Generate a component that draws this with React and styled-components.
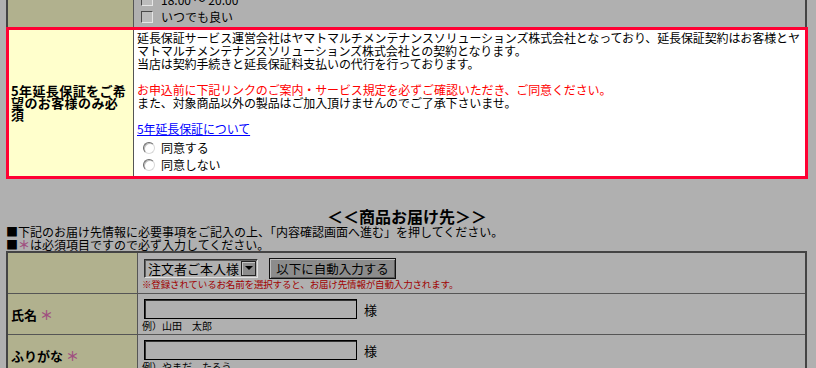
import styled, { createGlobalStyle } from 'styled-components';

const GlobalStyle = createGlobalStyle`
  html, body {
    margin: 0;
    padding: 0;
    background: #b0b0b0;
  }
  body {
    font-family: "Noto Sans CJK JP", "Noto Sans", sans-serif;
    font-size: 12px;
    color: #000;
    overflow: hidden;
  }
`;

const Page = styled.div`
  width: 816px;
  height: 368px;
  overflow: hidden;
  padding-left: 6px;
  box-sizing: border-box;
`;

const TopTable = styled.div`
  margin-top: -9px;
  width: 801px;
  box-sizing: border-box;
  display: grid;
  grid-template-columns: 126px 1fr;
  border-left: 2px solid #444;
  border-right: 2px solid #444;
`;

const KhakiCell = styled.div`
  background: #b1b18e;
  border-right: 1px solid #555;
`;

const TimeCell = styled.div`
  padding: 0 0 2px 7px;
`;

const CheckLine = styled.label`
  display: flex;
  align-items: center;
  gap: 8px;
  height: 17px;
  line-height: 17px;
`;

const CheckBox = styled.span`
  width: 12px;
  height: 12px;
  box-sizing: border-box;
  border: 1px solid;
  border-color: #4a4a4a #e6e6e6 #e6e6e6 #4a4a4a;
  background: #bcbcbc;
`;

const GuaranteeRow = styled.div`
  width: 802px;
  box-sizing: border-box;
  display: grid;
  grid-template-columns: 125px 1fr;
  border: 3px solid #ff0033;
`;

const GuaranteeLabel = styled.div`
  background: #ffffcc;
  border-right: 1px solid #555;
  display: flex;
  align-items: center;
  padding-left: 2px;
  font-size: 13px;
  font-weight: 700;
  line-height: 12px;
  letter-spacing: 0.4px;
`;

const GuaranteeBody = styled.div`
  background: #fff;
  padding: 1px 3px 3px 3px;
  line-height: 13px;
  white-space: nowrap;
  letter-spacing: -0.12px;
`;

const Para = styled.p`
  margin: 0 0 13px;
  color: ${(p) => (p.$red ? '#ff0000' : '#000')};
`;

const Line = styled.div`
  color: ${(p) => (p.$red ? '#ff0000' : '#000')};
`;

const InfoLink = styled.a`
  color: #0000ff;
  text-decoration: underline;
  cursor: pointer;
`;

const RadioGroup = styled.div`
  padding-top: 4px;
`;

const RadioLine = styled.label`
  display: flex;
  align-items: center;
  gap: 6px;
  height: 17px;
  padding-left: 6px;
`;

const Radio = styled.span`
  width: 12px;
  height: 12px;
  box-sizing: border-box;
  border-radius: 50%;
  border: 1px solid;
  border-color: #6a6a6a #d8d8d8 #d8d8d8 #6a6a6a;
  background: #fff;
  box-shadow: inset 1px 1px 0 #bdbdbd;
`;

const Heading = styled.h2`
  margin: 28px 0 0;
  width: 802px;
  text-align: center;
  font-size: 16px;
  font-weight: 700;
  line-height: 18px;
`;

const Notes = styled.div`
  line-height: 13px;
  font-size: 12px;
`;

const Mark = styled.span`
  color: #a05080;
  font-weight: 700;
`;

const FormTable = styled.div`
  width: 801px;
  box-sizing: border-box;
  border: 2px solid #444;
  border-bottom: none;
`;

const FormRow = styled.div`
  display: grid;
  grid-template-columns: 130px 1fr;
  height: 40px;
  border-bottom: 1px solid #555;
`;

const FormLabel = styled.div`
  background: #b1b18e;
  border-right: 1px solid #555;
  display: flex;
  align-items: center;
  gap: 3px;
  padding-left: 3px;
  font-size: 13px;
  font-weight: 700;
`;

const FormValue = styled.div`
  padding: 5px 0 0 4px;
  display: flex;
  flex-direction: column;
`;

const Controls = styled.div`
  display: flex;
  align-items: center;
  height: 20px;
  margin-left: 2px;
  gap: ${(p) => p.$gap || 7}px;
`;

const SelectBox = styled.div`
  width: 114px;
  height: 19px;
  box-sizing: border-box;
  display: flex;
  align-items: center;
  justify-content: space-between;
  border: 1px solid;
  border-color: #303030 #e0e0e0 #e0e0e0 #303030;
  box-shadow: inset 1px 1px 0 #606060;
  padding-left: 3px;
  font-size: 13px;
  line-height: 17px;
`;

const ArrowButton = styled.span`
  width: 15px;
  height: 15px;
  margin-right: 1px;
  box-sizing: border-box;
  background: #8c8c8c;
  border: 1px solid #222;
  box-shadow: inset 1px 1px 0 #c4c4c4;
  display: flex;
  align-items: center;
  justify-content: center;

  &::after {
    content: '';
    border-left: 4px solid transparent;
    border-right: 4px solid transparent;
    border-top: 4px solid #000;
  }
`;

const FillButton = styled.button`
  width: 127px;
  height: 21px;
  box-sizing: border-box;
  background: #8c8c8c;
  border: 1px solid #111;
  box-shadow: inset 1px 1px 0 #c0c0c0, inset -1px -1px 0 #5a5a5a;
  padding: 0;
  font-family: "Noto Sans CJK JP", sans-serif;
  font-size: 12.5px;
  line-height: 19px;
  color: #000;
`;

const Hint = styled.div`
  color: #a00000;
  font-size: 9.5px;
  line-height: 12px;
  letter-spacing: -0.15px;
  white-space: nowrap;
`;

const Example = styled.div`
  font-size: 10px;
  line-height: 12px;
  margin-top: 1px;
`;

const TextInput = styled.input`
  width: 213px;
  height: 20px;
  box-sizing: border-box;
  border: 1px solid #000;
  box-shadow: inset 1px 1px 0 #333;
  background: #b0b0b0;
  outline: none;
`;

const Suffix = styled.span`
  font-size: 13px;
`;

export default function App() {
  return (
    <Page>
      <GlobalStyle />
      <TopTable>
        <KhakiCell />
        <TimeCell>
          <CheckLine><CheckBox />18:00 ～ 20:00</CheckLine>
          <CheckLine><CheckBox />いつでも良い</CheckLine>
        </TimeCell>
      </TopTable>

      <GuaranteeRow>
        <GuaranteeLabel>
          <span>5年延長保証をご希<br />望のお客様のみ必<br />須</span>
        </GuaranteeLabel>
        <GuaranteeBody>
          <Para>
            延長保証サービス運営会社はヤマトマルチメンテナンスソリューションズ株式会社となっており、延長保証契約はお客様とヤ<br />
            マトマルチメンテナンスソリューションズ株式会社との契約となります。<br />
            当店は契約手続きと延長保証料支払いの代行を行っております。
          </Para>
          <Line $red>お申込前に下記リンクのご案内・サービス規定を必ずご確認いただき、ご同意ください。</Line>
          <Para>また、対象商品以外の製品はご加入頂けませんのでご了承下さいませ。</Para>
          <InfoLink>5年延長保証について</InfoLink>
          <RadioGroup>
            <RadioLine><Radio />同意する</RadioLine>
            <RadioLine><Radio />同意しない</RadioLine>
          </RadioGroup>
        </GuaranteeBody>
      </GuaranteeRow>

      <Heading>＜＜商品お届け先＞＞</Heading>
      <Notes>
        <div>■下記のお届け先情報に必要事項をご記入の上、「内容確認画面へ進む」を押してください。</div>
        <div>■<Mark>＊</Mark>は必須項目ですので必ず入力してください。</div>
      </Notes>

      <FormTable>
        <FormRow>
          <FormLabel />
          <FormValue>
            <Controls $gap={11}>
              <SelectBox>注文者ご本人様<ArrowButton /></SelectBox>
              <FillButton>以下に自動入力する</FillButton>
            </Controls>
            <Hint>※登録されているお名前を選択すると、お届け先情報が自動入力されます。</Hint>
          </FormValue>
        </FormRow>
        <FormRow>
          <FormLabel>氏名<Mark>＊</Mark></FormLabel>
          <FormValue>
            <Controls>
              <TextInput />
              <Suffix>様</Suffix>
            </Controls>
            <Example>例）山田　太郎</Example>
          </FormValue>
        </FormRow>
        <FormRow>
          <FormLabel>ふりがな<Mark>＊</Mark></FormLabel>
          <FormValue>
            <Controls>
              <TextInput />
              <Suffix>様</Suffix>
            </Controls>
            <Example>例）やまだ　たろう</Example>
          </FormValue>
        </FormRow>
      </FormTable>
    </Page>
  );
}
